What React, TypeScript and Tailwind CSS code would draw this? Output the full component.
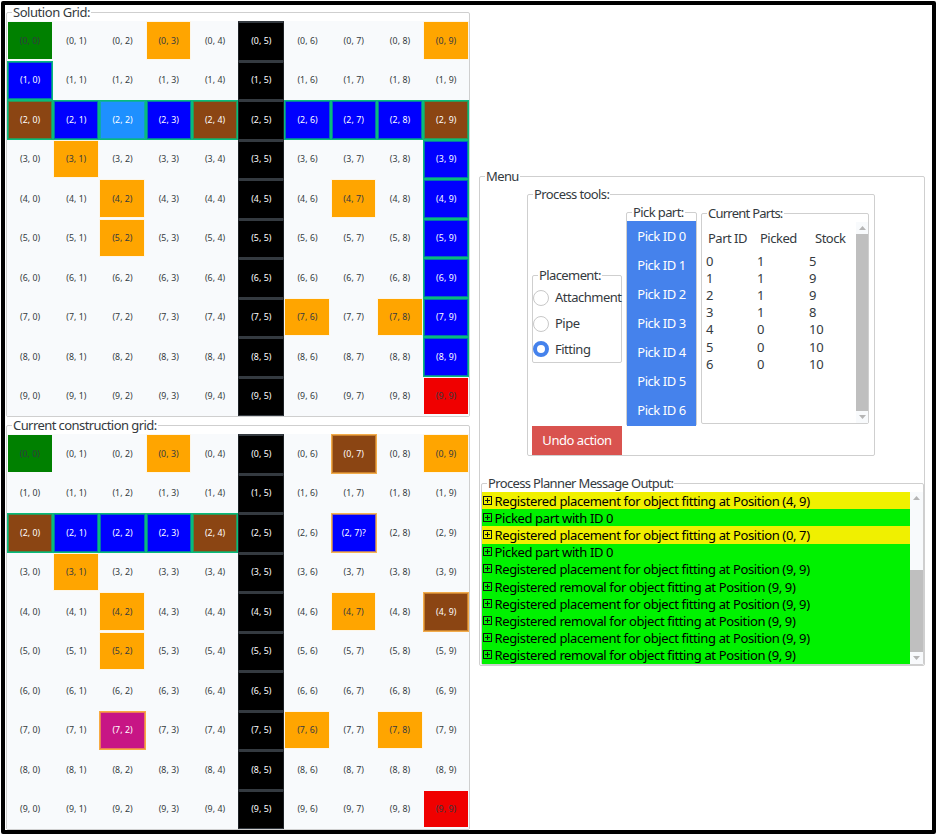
import type { ReactNode } from "react";

type Kind = "start" | "end" | "stone" | "wall" | "pipe" | "pipeHot" | "fit" | "fitWarn" | "pipeWarn" | "pinkWarn" | "empty";

const styles: Record<Kind, string> = {
  empty: "text-[#343a40] pt-px",
  start: "border border-[#f8fafc] bg-[#008000] pt-[2px] text-[#343a40]",
  end: "border border-[#f8fafc] bg-[#f00000] pt-[2px] text-[#343a40]",
  stone: "border border-[#fdf6e8] bg-[#ffa500] pt-[2px] text-[#343a40]",
  wall: "border-x border-t-2 border-b border-[#343a40] border-x-[#1d2125] bg-black text-white",
  pipe: "border border-[#08bb7c] bg-[#0000ff] pt-px text-white shadow-[inset_0_0_0_1px_#0578a8]",
  pipeHot: "border border-[#08bb7c] bg-[#1e90ff] pt-px text-white shadow-[inset_0_0_0_1px_#10aaa8]",
  fit: "border border-[#08bb7c] bg-[#8b4513] pt-px text-white shadow-[inset_0_0_0_1px_#329455]",
  fitWarn: "border border-[#f2ac4c] bg-[#8b4513] pt-px text-white shadow-[inset_0_0_0_1px_#c8802e]",
  pipeWarn: "border border-[#f8b550] bg-[#0000ff] pt-px text-white shadow-[inset_0_0_0_1px_#a0708a]",
  pinkWarn: "border border-[#f8ab42] bg-[#c71585] pt-px text-white shadow-[inset_0_0_0_1px_#ea7a58]",
};

const solution: Record<string, Kind> = {
  "0,0": "start", "0,3": "stone", "0,9": "stone", "1,0": "pipe",
  "2,0": "fit", "2,1": "pipe", "2,2": "pipeHot", "2,3": "pipe", "2,4": "fit",
  "2,6": "pipe", "2,7": "pipe", "2,8": "pipe", "2,9": "fit",
  "3,1": "stone", "3,9": "pipe", "4,2": "stone", "4,7": "stone", "4,9": "pipe",
  "5,2": "stone", "5,9": "pipe", "6,9": "pipe", "7,6": "stone", "7,8": "stone",
  "7,9": "pipe", "8,9": "pipe", "9,9": "end",
};

const current: Record<string, Kind> = {
  "0,0": "start", "0,3": "stone", "0,7": "fitWarn", "0,9": "stone",
  "2,0": "fit", "2,1": "pipe", "2,2": "pipe", "2,3": "pipe", "2,4": "fit", "2,7": "pipeWarn",
  "3,1": "stone", "4,2": "stone", "4,7": "stone", "4,9": "fitWarn", "5,2": "stone",
  "7,2": "pinkWarn", "7,6": "stone", "7,8": "stone", "9,9": "end",
};

const ten = Array.from({ length: 10 }, (_, i) => i);

function Grid({ cells, mark }: { cells: Record<string, Kind>; mark?: string }) {
  return (
    <div className="grid h-[394.9px] w-[462.4px] grid-cols-10 grid-rows-10 bg-[#f8fafc]">
      {ten.map((r) =>
        ten.map((c) => {
          const key = `${r},${c}`;
          const kind: Kind = c === 5 ? "wall" : cells[key] ?? "empty";
          const inset = kind === "start" || kind === "end" || kind === "stone";
          return (
            <div key={key} className={inset ? "flex pr-[0.5px] pb-px" : "flex"}>
              <div
                className={`flex flex-1 items-center justify-center text-[8.8px] tracking-[0.05px] ${styles[kind]}`}
              >
                ({r}, {c}){mark === key ? "?" : ""}
              </div>
            </div>
          );
        }),
      )}
    </div>
  );
}

function Group({ title, className, legend = "tracking-[-0.6px]", children }: { title: string; className: string; legend?: string; children: ReactNode }) {
  return (
    <div className={`rounded-[2px] border border-[#cfcfcf] ${className}`}>
      <div className={`-mt-[8px] ml-[5px] h-[14px] w-fit bg-white px-px leading-[15px] whitespace-nowrap ${legend}`}>{title}</div>
      {children}
    </div>
  );
}

function Arrow({ up }: { up?: boolean }) {
  return (
    <div className="flex h-[12px] w-full items-center justify-center bg-[#f8fafc]">
      <svg width="7" height="4" viewBox="0 0 7 4">
        <path d={up ? "M0 4 3.5 0 7 4z" : "M0 0h7L3.5 4z"} fill="#b5b5b5" />
      </svg>
    </div>
  );
}

const parts = [
  [0, 1, 5], [1, 1, 9], [2, 1, 9], [3, 1, 8], [4, 0, 10], [5, 0, 10], [6, 0, 10],
];

const messages: [string, boolean][] = [
  ["Registered placement for object fitting at Position (4, 9)", true],
  ["Picked part with ID 0", false],
  ["Registered placement for object fitting at Position (0, 7)", true],
  ["Picked part with ID 0", false],
  ["Registered placement for object fitting at Position (9, 9)", false],
  ["Registered removal for object fitting at Position (9, 9)", false],
  ["Registered placement for object fitting at Position (9, 9)", false],
  ["Registered removal for object fitting at Position (9, 9)", false],
  ["Registered placement for object fitting at Position (9, 9)", false],
  ["Registered removal for object fitting at Position (9, 9)", false],
];

function Radio({ label, on }: { label: string; on?: boolean }) {
  return (
    <div className="flex h-[25.8px] items-center">
      <span
        className={`h-4 w-4 shrink-0 rounded-full bg-white ${on ? "border-[4.5px] border-[#4582ec]" : "border border-[#c8c8c8]"}`}
      />
      <span className="ml-[6px] whitespace-nowrap">{label}</span>
    </div>
  );
}

export default function App() {
  return (
    <div className="h-[835px] w-[937px] overflow-hidden bg-white p-px font-['Noto_Sans',sans-serif] text-[13px] tracking-[-0.5px] text-[#343a40]">
      <div className="flex h-[833px] w-[935px] rounded-[2px] border-4 border-black bg-white">
        <div className="ml-px flex w-[464px] shrink-0 flex-col pt-[7px]">
          <Group title="Solution Grid:" className="h-[405px]" legend="tracking-[-0.45px]">
            <div className="pt-[2.3px]"><Grid cells={solution} /></div>
          </Group>
          <Group title="Current construction grid:" className="mt-[8px] h-[405px] shrink-0" legend="tracking-[-0.57px]">
            <div className="pt-[2.3px]"><Grid cells={current} mark="2,7" /></div>
          </Group>
        </div>

        <Group title="Menu" className="mt-[171px] ml-[9px] h-[490px] w-[446px] shrink-0">
          <Group title="Process tools:" className="mt-[11px] ml-[47px] h-[262px] w-[348px]">
            <div className="flex">
              <div className="ml-[3px] flex w-[91px] flex-col">
                <Group title="Placement:" className="mt-[74px] ml-px h-[88px] w-[90px]">
                  <div className="pt-[3px]">
                    <Radio label="Attachment" />
                    <Radio label="Pipe" />
                    <Radio label="Fitting" on />
                  </div>
                </Group>
                <div className="mt-[63px] ml-px flex h-[29px] w-[90px] items-center justify-center bg-[#d9534f] pt-px tracking-[-0.45px] text-white">Undo action</div>
              </div>
              <Group title="Pick part:" className="mt-[11px] ml-[4px] h-[214px] w-[71px]">
                <div className="mt-[2px] grid h-[205px] grid-rows-7 bg-[#4582ec] pb-px tracking-[-0.45px] text-white">
                  {[0, 1, 2, 3, 4, 5, 6].map((n) => (
                    <div key={n} className="flex items-center justify-center pt-[1.5px]">Pick ID {n}</div>
                  ))}
                </div>
              </Group>
              <Group title="Current Parts:" className="mt-[12px] ml-[4px] h-[211px] w-[168px]" legend="tracking-[-0.75px]">
                <div className="mt-[2px] flex h-[201px]">
                  <div className="w-[154px]">
                    <div className="flex h-[31px] items-center pt-[2px] pl-[6px]">
                      <span className="w-[52px]">Part ID</span>
                      <span className="w-[55px]">Picked</span>
                      <span>Stock</span>
                    </div>
                    {parts.map(([id, picked, stock]) => (
                      <div key={id} className="flex h-[17.17px] items-center pl-[4px] tracking-[-0.3px]">
                        <span className="w-[51px]">{id}</span>
                        <span className="w-[52px]">{picked}</span>
                        <span>{stock}</span>
                      </div>
                    ))}
                  </div>
                  <div className="flex w-[12px] flex-col">
                    <Arrow up />
                    <div className="flex-1 bg-[#bfbfbf]" />
                    <Arrow />
                  </div>
                </div>
              </Group>
            </div>
          </Group>
          <Group title="Process Planner Message Output:" className="mt-[27px] ml-px h-[182px] w-[443px]" legend="tracking-[-0.65px]">
            <div className="mt-[2px] flex h-[172px] text-black">
              <div className="grid w-[428px] grid-rows-10 tracking-[-0.36px]">
                {messages.map(([text, warn], i) => (
                  <div key={i} className={`flex items-center pl-[1px] leading-none whitespace-nowrap ${warn ? "bg-[#f0f000]" : "bg-[#00f200]"}`}>
                    <svg width="9" height="9" viewBox="0 0 9 9" shapeRendering="crispEdges" className="mr-[2.5px] mb-px shrink-0">
                      <path d="M.5.5h8v8h-8zM4.5 2v5M2 4.5h5" fill="none" stroke="#111" />
                    </svg>
                    <span className="pt-px">{text}</span>
                  </div>
                ))}
              </div>
              <div className="flex w-[13px] flex-col bg-[#f8fafc]">
                <Arrow up />
                <div className="mt-[66px] flex-1 bg-[#bfbfbf]" />
                <Arrow />
              </div>
            </div>
          </Group>
        </Group>
      </div>
    </div>
  );
}
